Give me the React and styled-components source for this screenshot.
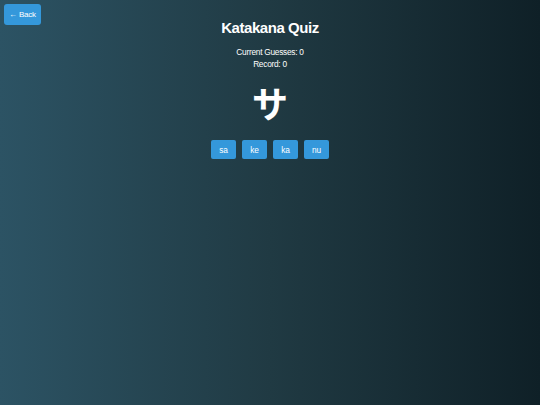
import React from 'react';
import styled, { createGlobalStyle } from 'styled-components';

const GlobalStyle = createGlobalStyle`
  html, body {
    margin: 0;
    padding: 0;
    height: 100%;
  }
  body {
    font-family: "Liberation Sans", Arial, sans-serif;
    background: linear-gradient(to right, #2c5364, #203a43, #0f2027);
    color: #fff;
  }
  #root {
    min-height: 100%;
  }
`;

const Page = styled.div`
  min-height: 405px;
  display: flex;
  flex-direction: column;
  align-items: center;
  padding-top: 19px;
  box-sizing: border-box;
`;

const BackButton = styled.button`
  position: absolute;
  top: 4px;
  left: 4px;
  width: 37px;
  height: 21px;
  padding: 0;
  border: none;
  border-radius: 3px;
  background: #3498db;
  color: #fff;
  font-family: inherit;
  font-size: 8px;
  letter-spacing: -0.2px;
  cursor: pointer;
`;

const Title = styled.h1`
  margin: 0 0 9px;
  font-size: 15px;
  font-weight: bold;
  line-height: 18px;
  letter-spacing: -0.45px;
`;

const Stat = styled.p`
  margin: 0;
  font-size: 8.3px;
  letter-spacing: -0.25px;
  line-height: 12px;
`;

const Kana = styled.div`
  margin-top: 10px;
  font-family: "Noto Sans CJK JP", sans-serif;
  font-size: 36px;
  font-weight: bold;
  line-height: 44px;
`;

const Options = styled.div`
  display: flex;
  gap: 6px;
  margin-top: 16px;
`;

const OptionButton = styled.button`
  width: 25px;
  height: 19px;
  padding: 0;
  border: none;
  border-radius: 2px;
  background: #3498db;
  color: #fff;
  font-family: inherit;
  font-size: 8.3px;
  letter-spacing: -0.2px;
  cursor: pointer;
`;

export default function App() {
  const options = ['sa', 'ke', 'ka', 'nu'];
  return (
    <>
      <GlobalStyle />
      <BackButton>← Back</BackButton>
      <Page>
        <Title>Katakana Quiz</Title>
        <Stat>Current Guesses: 0</Stat>
        <Stat>Record: 0</Stat>
        <Kana>サ</Kana>
        <Options>
          {options.map((o) => (
            <OptionButton key={o}>{o}</OptionButton>
          ))}
        </Options>
      </Page>
    </>
  );
}
